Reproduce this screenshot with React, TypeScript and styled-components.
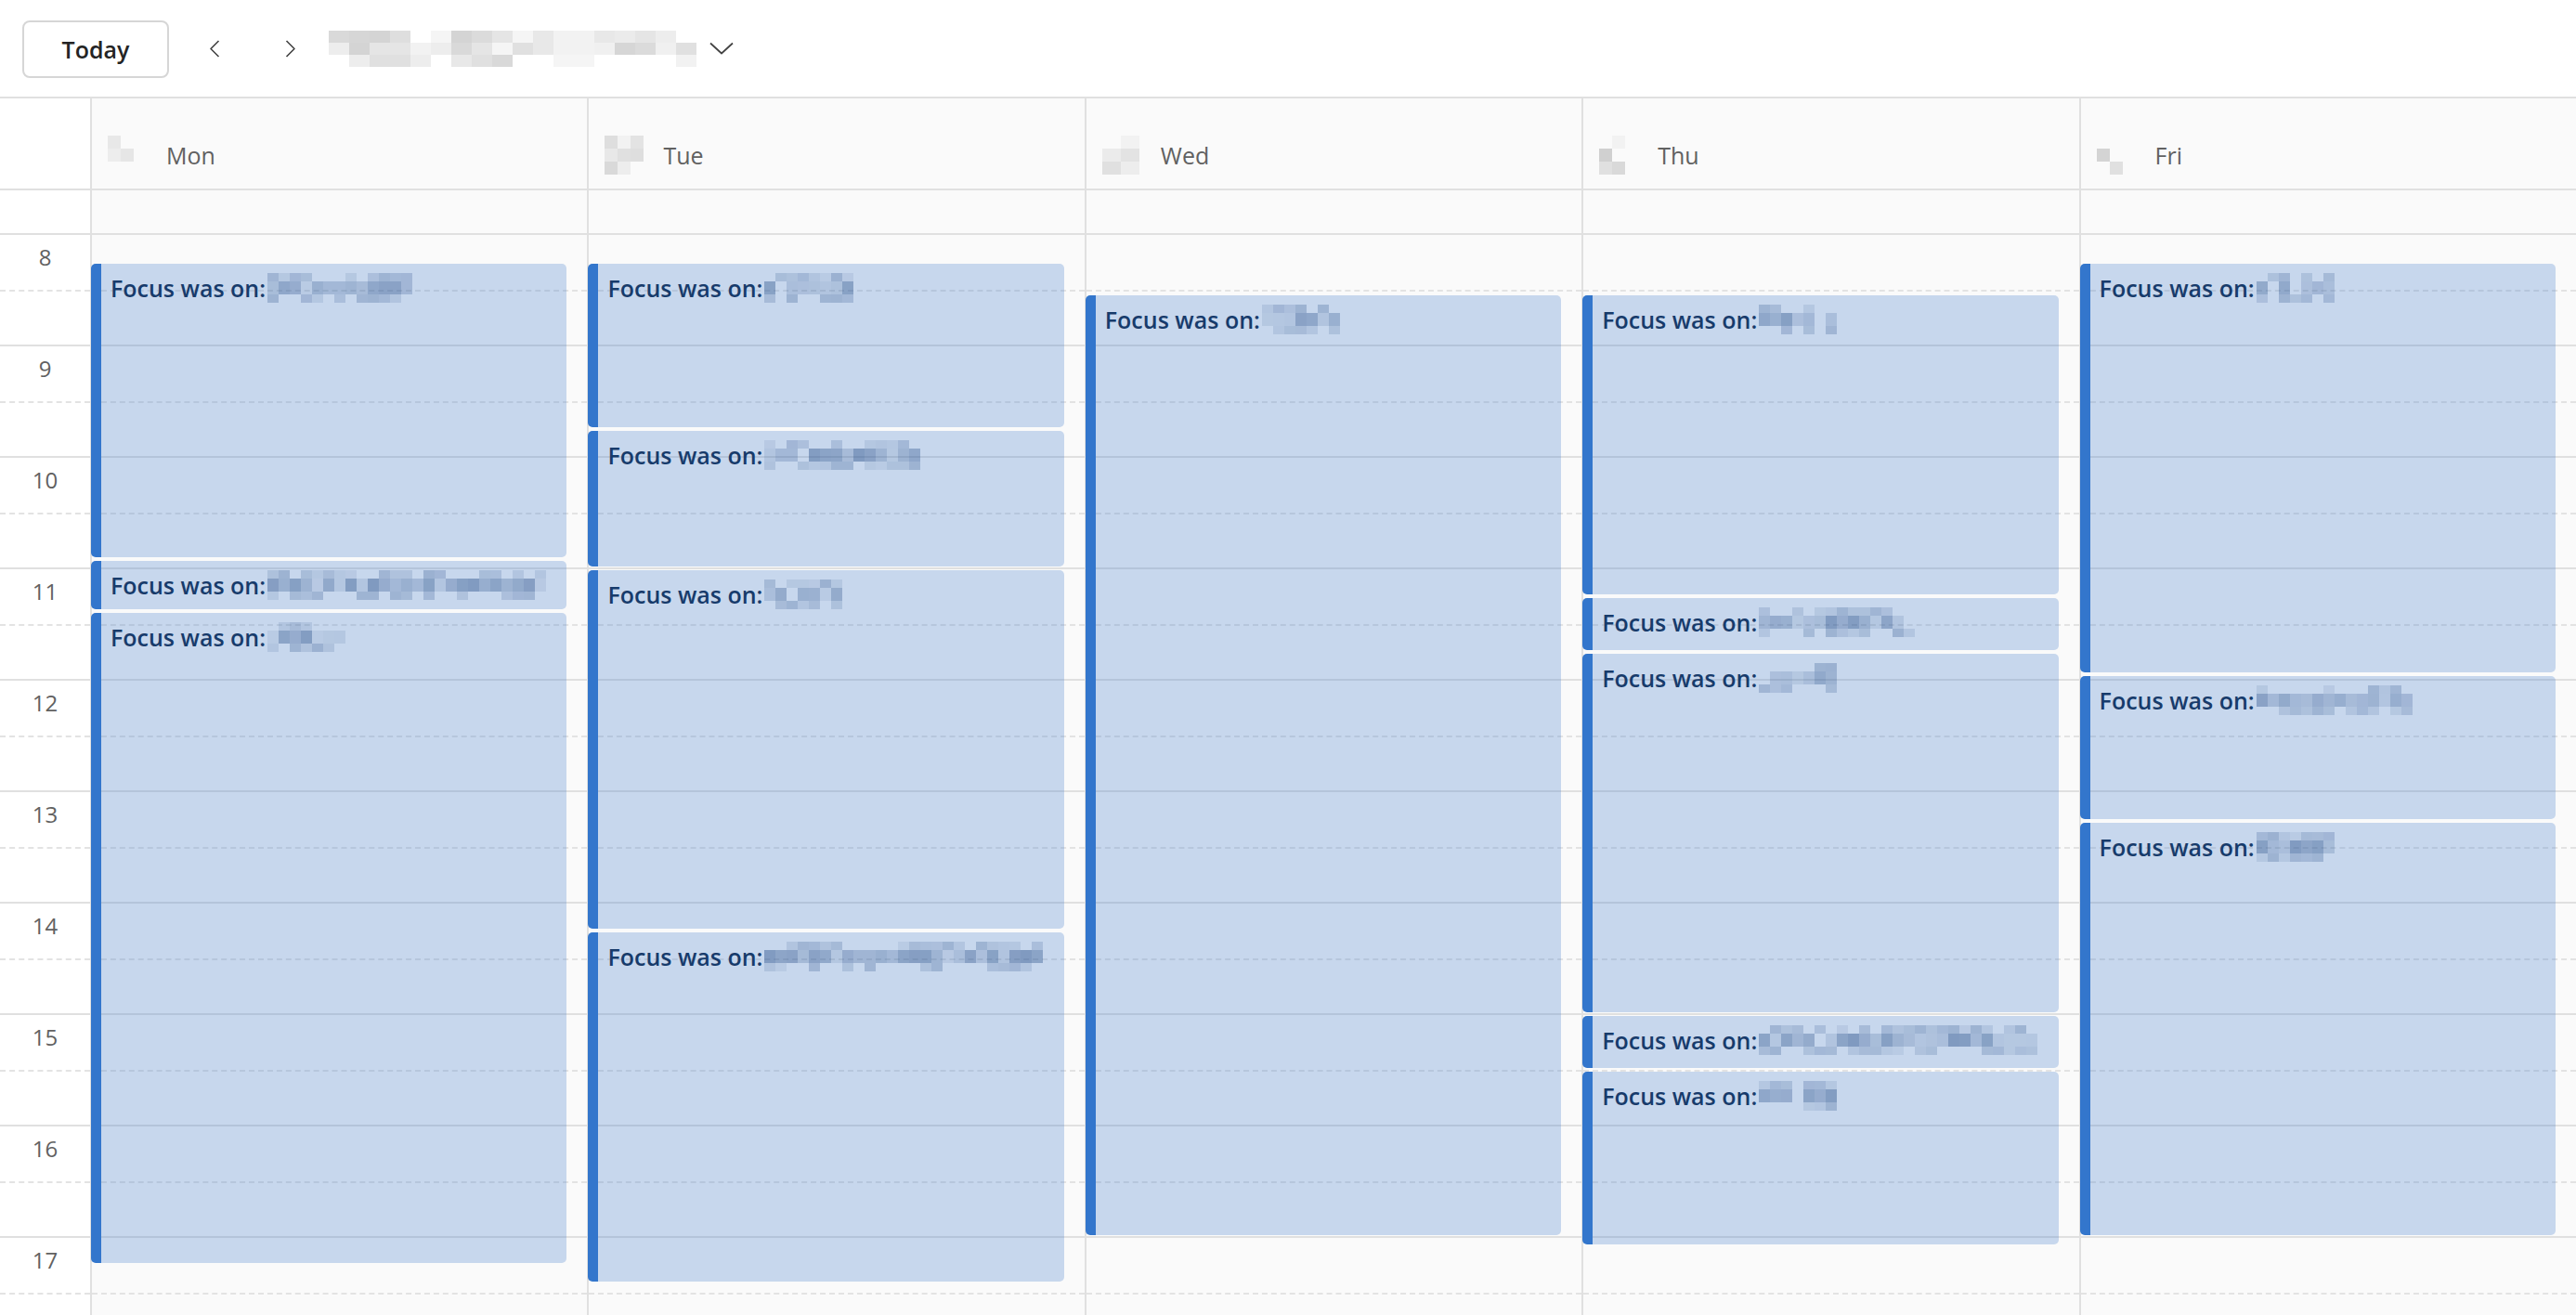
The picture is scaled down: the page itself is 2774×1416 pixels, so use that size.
import React from 'react';
import styled, { createGlobalStyle } from 'styled-components';

const GUTTER = 97;
const HOUR = 120;
const HOURS = [8, 9, 10, 11, 12, 13, 14, 15, 16, 17];

type Ev = { start: number; end: number; blur: number; seed: number };
type Day = { name: string; seed: number; dateCols: number; events: Ev[] };

// minutes from 8:00
const days: Day[] = [
  {
    name: 'Mon',
    seed: 3,
    dateCols: 2,
    events: [
      { start: 15, end: 175, blur: 160, seed: 11 },
      { start: 175, end: 203, blur: 300, seed: 12 },
      { start: 203, end: 555, blur: 84, seed: 13 },
    ],
  },
  {
    name: 'Tue',
    seed: 7,
    dateCols: 3,
    events: [
      { start: 15, end: 105, blur: 96, seed: 21 },
      { start: 105, end: 180, blur: 168, seed: 22 },
      { start: 180, end: 375, blur: 78, seed: 23 },
      { start: 375, end: 565, blur: 300, seed: 24 },
    ],
  },
  {
    name: 'Wed',
    seed: 9,
    dateCols: 2,
    events: [{ start: 32, end: 540, blur: 84, seed: 31 }],
  },
  {
    name: 'Thu',
    seed: 14,
    dateCols: 2,
    events: [
      { start: 32, end: 195, blur: 84, seed: 41 },
      { start: 195, end: 225, blur: 166, seed: 42 },
      { start: 225, end: 420, blur: 84, seed: 43 },
      { start: 420, end: 450, blur: 300, seed: 44 },
      { start: 450, end: 545, blur: 84, seed: 45 },
    ],
  },
  {
    name: 'Fri',
    seed: 17,
    dateCols: 2,
    events: [
      { start: 15, end: 237, blur: 78, seed: 51 },
      { start: 237, end: 316, blur: 170, seed: 52 },
      { start: 316, end: 540, blur: 86, seed: 53 },
    ],
  },
];

const rng = (seed: number) => {
  let s = seed * 7919 + 13;
  return () => {
    s = (s * 9301 + 49297) % 233280;
    return s / 233280;
  };
};

interface MosaicProps {
  cols: number;
  rows: number;
  cw: number;
  ch: number;
  seed: number;
  tone: 'blue' | 'gray';
}

// pixelated (redacted) text
const Mosaic: React.FC<MosaicProps> = ({ cols, rows, cw, ch, seed, tone }) => {
  const r = rng(seed);
  const cells = [];
  for (let y = 0; y < rows; y++) {
    for (let x = 0; x < cols; x++) {
      const middle = y === Math.floor(rows / 2);
      const empty = r() < (middle ? 0.08 : 0.4);
      let bg = 'transparent';
      if (!empty) {
        if (tone === 'blue') {
          const a = 0.08 + r() * (middle ? 0.34 : 0.18);
          bg = `rgba(30, 70, 130, ${a.toFixed(2)})`;
        } else {
          const a = 0.03 + r() * 0.14;
          bg = `rgba(0, 0, 0, ${a.toFixed(2)})`;
        }
      }
      cells.push(<span key={`${x}-${y}`} style={{ background: bg }} />);
    }
  }
  return (
    <MosaicGrid $cols={cols} $cw={cw} $ch={ch}>
      {cells}
    </MosaicGrid>
  );
};

const App: React.FC = () => {
  return (
    <Page>
      <GlobalStyle />
      <Toolbar>
        <TodayButton>Today</TodayButton>
        <NavButton aria-label="Previous">
          <svg width="12" height="19" viewBox="0 0 12 19" fill="none">
            <path d="M10.5 1 L2 9.5 L10.5 18" stroke="#424242" strokeWidth="1.6" strokeLinejoin="round" />
          </svg>
        </NavButton>
        <NavButton aria-label="Next" $gap={42}>
          <svg width="12" height="19" viewBox="0 0 12 19" fill="none">
            <path d="M1.5 1 L10 9.5 L1.5 18" stroke="#424242" strokeWidth="1.6" strokeLinejoin="round" />
          </svg>
        </NavButton>
        <Title>
          <Mosaic cols={18} rows={3} cw={22} ch={13} seed={99} tone="gray" />
          <svg width="26" height="14" viewBox="0 0 26 14" fill="none">
            <path d="M1 1.5 L13 12.5 L25 1.5" stroke="#424242" strokeWidth="1.7" strokeLinejoin="round" />
          </svg>
        </Title>
      </Toolbar>

      <HeaderRow>
        <Corner />
        {days.map((d) => (
          <DayHeader key={d.name}>
            <DateBox>
              <Mosaic cols={d.dateCols} rows={3} cw={d.name === 'Wed' ? 20 : 14} ch={14} seed={d.seed} tone="gray" />
            </DateBox>
            <DayName>{d.name}</DayName>
          </DayHeader>
        ))}
      </HeaderRow>

      <AllDayRow>
        <Corner />
        {days.map((d) => (
          <AllDayCell key={d.name} />
        ))}
      </AllDayRow>

      <Body>
        <Gutter>
          {HOURS.map((h) => (
            <HourSlot key={h}>
              <HourLabel>{h}</HourLabel>
            </HourSlot>
          ))}
        </Gutter>
        {days.map((d) => (
          <DayColumn key={d.name}>
            {HOURS.map((h) => (
              <HourSlot key={h} />
            ))}
            {d.events.map((e) => (
              <Event
                key={e.seed}
                style={{ top: e.start * 2 + 1, height: (e.end - e.start) * 2 - 4 }}
              >
                <EventTitle>
                  <span>Focus was on:</span>
                  <Mosaic cols={Math.round(e.blur / 12)} rows={3} cw={12} ch={14} seed={e.seed} tone="blue" />
                </EventTitle>
              </Event>
            ))}
          </DayColumn>
        ))}
      </Body>
    </Page>
  );
};
export default App;

const GlobalStyle = createGlobalStyle`
  html, body {
    margin: 0;
    padding: 0;
    background: #fff;
    font-family: "Open Sans", "Noto Sans", "Liberation Sans", sans-serif;
  }
  * { box-sizing: border-box; }
`;

const Page = styled.div`
  height: 100vh;
  display: flex;
  flex-direction: column;
  overflow: hidden;
`;

const Toolbar = styled.div`
  flex: none;
  height: 106px;
  display: flex;
  align-items: center;
  padding-left: 24px;
  border-bottom: 2px solid #e0e0e0;
`;

const TodayButton = styled.button`
  width: 158px;
  height: 62px;
  margin-top: 2px;
  border: 2px solid #d6d6d6;
  border-radius: 8px;
  background: #fff;
  color: #242424;
  font-family: inherit;
  font-size: 25px;
  font-weight: 600;
  cursor: pointer;
`;

const NavButton = styled.button<{ $gap?: number }>`
  width: 40px;
  height: 44px;
  margin-left: ${({ $gap }) => $gap ?? 29}px;
  display: flex;
  align-items: center;
  justify-content: center;
  border: none;
  background: transparent;
  padding: 0;
  cursor: pointer;
`;

const Title = styled.div`
  margin-left: 21px;
  display: flex;
  align-items: center;
  gap: 14px;
`;

const MosaicGrid = styled.span<{ $cols: number; $cw: number; $ch: number }>`
  display: inline-grid;
  flex: none;
  grid-template-columns: repeat(${({ $cols }) => $cols}, ${({ $cw }) => $cw}px);
  grid-auto-rows: ${({ $ch }) => $ch}px;
`;

const gridCols = `${GUTTER}px repeat(5, minmax(0, 1fr))`;

const HeaderRow = styled.div`
  flex: none;
  display: grid;
  grid-template-columns: ${gridCols};
  height: 99px;
  border-bottom: 2px solid #e0e0e0;
`;

const Corner = styled.div`
  background: #fff;
`;

const DayHeader = styled.div`
  display: flex;
  align-items: center;
  padding: 24px 0 0 17px;
  background: #fafafa;
  border-left: 2px solid #e0e0e0;
`;

const DateBox = styled.div`
  width: 63px;
  display: flex;
`;

const DayName = styled.span`
  font-size: 25px;
  color: #616161;
`;

const AllDayRow = styled.div`
  flex: none;
  display: grid;
  grid-template-columns: ${gridCols};
  height: 48px;
  border-bottom: 2px solid #e0e0e0;
`;

const AllDayCell = styled.div`
  background: #fafafa;
  border-left: 2px solid #e0e0e0;
`;

const Body = styled.div`
  flex: 1;
  min-height: 0;
  display: grid;
  grid-template-columns: ${gridCols};
  overflow: hidden;
`;

const Gutter = styled.div`
  background: #fff;
`;

const HourSlot = styled.div`
  position: relative;
  height: ${HOUR}px;
  border-bottom: 2px solid #e0e0e0;

  &::after {
    content: '';
    position: absolute;
    left: 0;
    right: 0;
    top: 59px;
    border-top: 2px dashed #e3e3e3;
  }
`;

const HourLabel = styled.div`
  padding-top: 8px;
  text-align: center;
  font-size: 24px;
  line-height: 32px;
  color: #616161;
`;

const DayColumn = styled.div`
  position: relative;
  background: #fafafa;
  border-left: 2px solid #e0e0e0;
`;

const Event = styled.div`
  position: absolute;
  left: -1px;
  width: calc(100% - 21px);
  border-left: 11px solid #3376cc;
  border-radius: 5px;
  background: rgba(46, 112, 200, 0.25);
  padding: 10px 0 0 10px;
  overflow: hidden;
  z-index: 1;
`;

const EventTitle = styled.div`
  display: flex;
  align-items: center;
  white-space: nowrap;
  overflow: hidden;
  height: 32px;
  font-size: 25px;
  font-weight: 600;
  color: #173b6b;

  & > span:first-child {
    margin-right: 2px;
  }
`;
